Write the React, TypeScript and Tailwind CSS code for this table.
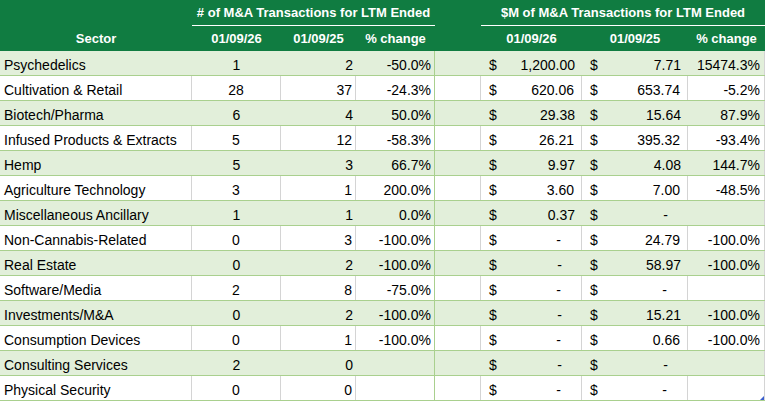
const rows = [
  ["Psychedelics", "1", "2", "-50.0%", "1,200.00", "7.71", "15474.3%"],
  ["Cultivation & Retail", "28", "37", "-24.3%", "620.06", "653.74", "-5.2%"],
  ["Biotech/Pharma", "6", "4", "50.0%", "29.38", "15.64", "87.9%"],
  ["Infused Products & Extracts", "5", "12", "-58.3%", "26.21", "395.32", "-93.4%"],
  ["Hemp", "5", "3", "66.7%", "9.97", "4.08", "144.7%"],
  ["Agriculture Technology", "3", "1", "200.0%", "3.60", "7.00", "-48.5%"],
  ["Miscellaneous Ancillary", "1", "1", "0.0%", "0.37", "-", ""],
  ["Non-Cannabis-Related", "0", "3", "-100.0%", "-", "24.79", "-100.0%"],
  ["Real Estate", "0", "2", "-100.0%", "-", "58.97", "-100.0%"],
  ["Software/Media", "2", "8", "-75.0%", "-", "-", ""],
  ["Investments/M&A", "0", "2", "-100.0%", "-", "15.21", "-100.0%"],
  ["Consumption Devices", "0", "1", "-100.0%", "-", "0.66", "-100.0%"],
  ["Consulting Services", "2", "0", "", "-", "-", ""],
  ["Physical Security", "0", "0", "", "-", "-", ""],
]

const gridCols = "grid grid-cols-[192px_89px_75px_79px_46px_101px_106px_77px]"

function Money({ value, green }: { value: string; green: boolean }) {
  const dash = value === "-"
  return (
    <div
      className={`flex items-end justify-between pl-[8px] pb-[2px] ${dash ? "pr-[20px]" : "pr-[7px]"} ${
        green ? "" : "border-r border-[#d4d4d4]"
      }`}
    >
      <span>$</span>
      <span>{value}</span>
    </div>
  )
}

export default function App() {
  return (
    <div
      className="relative w-[765px] h-[401px] overflow-hidden bg-white text-[14px] leading-4 text-black"
      style={{ fontFamily: '"Liberation Sans", Arial, sans-serif' }}
    >
      <div className="bg-[#107c41] text-white font-bold text-[13px]">
        <div className={`${gridCols} h-[26px]`}>
          <div />
          <div className="col-span-3 flex items-center justify-center border-b border-white pt-[1px]">
            # of M&amp;A Transactions for LTM Ended
          </div>
          <div />
          <div className="col-span-3 flex items-center justify-center border-b border-white pt-[1px]">
            $M of M&amp;A Transactions for LTM Ended
          </div>
        </div>
        <div className={`${gridCols} h-[25px] items-center text-center`}>
          <div>Sector</div>
          <div>01/09/26</div>
          <div>01/09/25</div>
          <div>% change</div>
          <div />
          <div>01/09/26</div>
          <div>01/09/25</div>
          <div>% change</div>
        </div>
      </div>
      {rows.map((r, i) => {
        const green = i % 2 === 0
        const line = green ? "" : "border-r border-[#d4d4d4]"
        return (
          <div
            key={i}
            className={`${gridCols} h-[25px] border-b border-[#a9d08e] ${green ? "bg-[#e2efda]" : "bg-white"}`}
          >
            <div className={`flex items-end pl-[4px] pb-[2px] whitespace-nowrap ${line}`}>{r[0]}</div>
            <div className={`flex items-end justify-center pb-[2px] ${line}`}>{r[1]}</div>
            <div className={`flex items-end justify-end pr-[3px] pb-[2px] ${line}`}>{r[2]}</div>
            <div className="flex items-end justify-end pr-[3px] pb-[2px] border-r border-[#a9d08e]">{r[3]}</div>
            <div className={line} />
            <Money value={r[4]} green={green} />
            {r[5] === "" ? <div className={line} /> : <Money value={r[5]} green={green} />}
            <div className="flex items-end justify-end pr-[4px] pb-[2px] border-r border-[#d4d4d4]">{r[6]}</div>
          </div>
        )
      })}
      <div className="absolute right-[1px] bottom-[1px] w-0 h-0 border-l-[4px] border-l-transparent border-b-[4px] border-b-[#3a5fcd]" />
    </div>
  )
}
